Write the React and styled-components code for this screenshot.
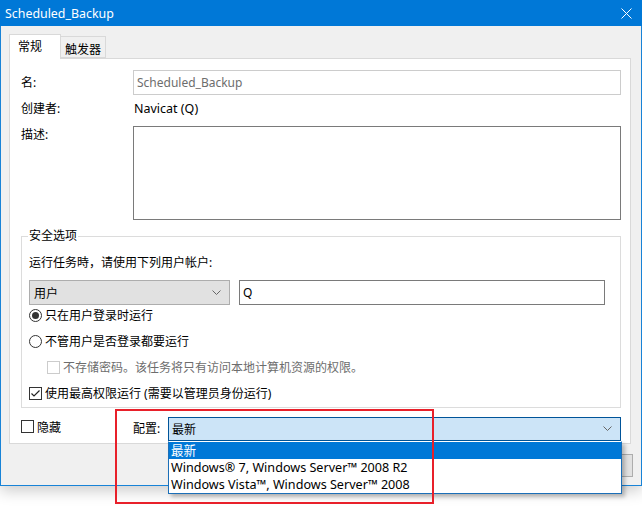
import React from 'react';
import styled, { createGlobalStyle } from 'styled-components';

const GlobalStyle = createGlobalStyle`
  html, body {
    margin: 0;
    padding: 0;
    background: #fff;
  }
  body {
    font-family: "Noto Sans", "Noto Sans CJK SC", sans-serif;
    font-size: 12px;
    color: #000;
    overflow: hidden;
  }
  * {
    box-sizing: border-box;
  }
`;

const Page = styled.div`
  position: relative;
  width: 642px;
  height: 510px;
  background: #fff;
`;

const Window = styled.div`
  width: 642px;
  height: 486px;
  display: flex;
  flex-direction: column;
  background: #f0f0f0;
  border: 1px solid #1883d7;
  border-top: none;
  box-shadow: 0 5px 14px rgba(0, 0, 0, 0.2);
`;

const TitleBar = styled.div`
  flex: none;
  height: 26px;
  margin: 0 -1px;
  padding: 0 10px 0 5px;
  display: flex;
  align-items: center;
  justify-content: space-between;
  background: #0078d7;
  color: #fff;
  font-size: 12.4px;
`;

const Body = styled.div`
  flex: 1;
  display: flex;
  flex-direction: column;
  padding: 8px 8px 0 8px;
`;

const TabStrip = styled.div`
  display: flex;
  align-items: flex-end;
  height: 24px;
`;

const Tab = styled.div`
  position: relative;
  z-index: ${p => (p.$active ? 1 : 0)};
  height: ${p => (p.$active ? '25px' : '22px')};
  margin-bottom: ${p => (p.$active ? '-1px' : '0')};
  margin-left: ${p => (p.$active ? '0' : '-1px')};
  width: ${p => (p.$active ? '52px' : '46px')};
  padding: ${p => (p.$active ? '4px 0 0 8px' : '5px 0 0 4px')};
  line-height: 16px;
  background: ${p => (p.$active ? '#fff' : '#f0f0f0')};
  border: 1px solid #d9d9d9;
  border-bottom: ${p => (p.$active ? 'none' : '1px solid #d9d9d9')};
`;

const Panel = styled.div`
  width: 622px;
  height: 386px;
  padding: 11px 9px 2px 11px;
  background: #fff;
  border: 1px solid #d9d9d9;
  display: flex;
  flex-direction: column;
`;

const FieldRow = styled.div`
  display: grid;
  grid-template-columns: 112px 1fr;
  align-items: ${p => (p.$top ? 'start' : 'center')};
  height: ${p => p.$h}px;
  margin-top: ${p => p.$mt || 0}px;
`;

const Label = styled.span`
  line-height: ${p => p.$lh || 16}px;
  white-space: nowrap;
`;

const TextBox = styled.div`
  flex: 1;
  height: 100%;
  padding-left: 3px;
  display: flex;
  align-items: ${p => (p.$multi ? 'flex-start' : 'center')};
  background: #fff;
  border: 1px solid ${p => (p.$disabled ? '#cccccc' : '#7a7a7a')};
  color: ${p => (p.$disabled ? '#6d6d6d' : '#000')};
  white-space: nowrap;
`;

const Value = styled.span`
  padding-left: 1px;
  line-height: 16px;
  font-size: 12.5px;
`;

const Group = styled.fieldset`
  margin: 8px 0 0 0;
  padding: 0 15px 4px 7px;
  border: 1px solid #dcdcdc;
  min-width: 0;
`;

const Legend = styled.legend`
  padding: 0 1px;
  margin-left: -1px;
  line-height: 16px;
`;

const Hint = styled.div`
  margin-top: 11px;
  line-height: 16px;
`;

const AccountRow = styled.div`
  display: flex;
  gap: 9px;
  height: 25px;
  margin-top: 9px;
`;

const ComboBox = styled.div`
  flex: ${p => (p.$width ? 'none' : '1')};
  width: ${p => (p.$width ? `${p.$width}px` : 'auto')};
  height: 100%;
  padding: 0 8px 0 ${p => p.$pl || 3}px;
  display: flex;
  align-items: center;
  justify-content: space-between;
  background: ${p => (p.$focused ? '#cce4f7' : '#e1e1e1')};
  border: 1px solid ${p => (p.$focused ? '#005499' : '#adadad')};
`;

const Options = styled.div`
  display: flex;
  flex-direction: column;
  gap: 6px;
`;

const OptionRow = styled.div`
  height: 20px;
  display: flex;
  align-items: center;
  gap: 3px;
  padding-left: ${p => p.$indent || 0}px;
  color: ${p => (p.$disabled ? '#6d6d6d' : '#000')};
  white-space: nowrap;
`;

const Radio = styled.span`
  flex: none;
  width: 13px;
  height: 13px;
  border-radius: 50%;
  border: 1px solid #333;
  display: flex;
  align-items: center;
  justify-content: center;
  background: #fff;

  &::after {
    content: '';
    width: 7px;
    height: 7px;
    border-radius: 50%;
    background: ${p => (p.$checked ? '#333' : 'transparent')};
  }
`;

const Box = styled.span`
  flex: none;
  width: 13px;
  height: 13px;
  border: 1px solid ${p => (p.$disabled ? '#cccccc' : '#333')};
  background: #fff;
  display: flex;
  align-items: center;
  justify-content: center;
`;

const BottomRow = styled.div`
  display: grid;
  grid-template-columns: 112px 35px 1fr;
  height: 24px;
  margin-top: 9px;
  align-items: center;
`;

const HideOption = styled(OptionRow)`
  align-self: start;
  height: 19px;
`;

const ButtonRow = styled.div`
  display: flex;
  justify-content: flex-end;
  gap: 8px;
  margin-top: 10px;
`;

const Button = styled.div`
  width: 75px;
  height: 23px;
  display: flex;
  align-items: center;
  justify-content: center;
  background: #e1e1e1;
  border: 1px solid #adadad;
`;

const DropList = styled.div`
  position: absolute;
  left: 168px;
  top: 441px;
  width: 454px;
  background: #fff;
  border: 1px solid #1b6fb8;
  border-top-color: #fff;
  box-shadow: 3px 3px 4px rgba(0, 0, 0, 0.25);
`;

const DropItem = styled.div`
  height: 17px;
  padding-left: 2px;
  line-height: 17px;
  font-size: 12.6px;
  white-space: nowrap;
  background: ${p => (p.$selected ? '#0078d7' : '#fff')};
  color: ${p => (p.$selected ? '#fff' : '#000')};
`;

const Annotation = styled.div`
  position: absolute;
  left: 115px;
  top: 409px;
  width: 319px;
  height: 95px;
  border: 2px solid #e8202a;
  pointer-events: none;
`;

const CloseIcon = () => (
  <svg width="11" height="11" viewBox="0 0 11 11">
    <path d="M0.5 0.5 L10.5 10.5 M10.5 0.5 L0.5 10.5" stroke="#fff" strokeWidth="1" />
  </svg>
);

const Chevron = () => (
  <svg width="9" height="6" viewBox="0 0 9 6">
    <path d="M0.5 0.5 L4.5 4.5 L8.5 0.5" stroke="#666" strokeWidth="1" fill="none" />
  </svg>
);

const Check = () => (
  <svg width="11" height="11" viewBox="0 0 11 11">
    <path d="M1.5 5.5 L4 8 L9.5 2.5" stroke="#222" strokeWidth="1.2" fill="none" />
  </svg>
);

export default function App() {
  return (
    <Page>
      <GlobalStyle />
      <Window>
        <TitleBar>
          <span>Scheduled_Backup</span>
          <CloseIcon />
        </TitleBar>
        <Body>
          <TabStrip>
            <Tab $active>常规</Tab>
            <Tab>触发器</Tab>
          </TabStrip>
          <Panel>
            <FieldRow $h={25}>
              <Label>名:</Label>
              <TextBox $disabled>Scheduled_Backup</TextBox>
            </FieldRow>
            <FieldRow $h={28}>
              <Label>创建者:</Label>
              <Value>Navicat (Q)</Value>
            </FieldRow>
            <FieldRow $h={94} $mt={3} $top>
              <Label $lh={18}>描述:</Label>
              <TextBox $multi />
            </FieldRow>
            <Group>
              <Legend>安全选项</Legend>
              <Hint>运行任务時，请使用下列用户帐户:</Hint>
              <AccountRow>
                <ComboBox $width={201} $pl={4}>
                  <span>用户</span>
                  <Chevron />
                </ComboBox>
                <TextBox>Q</TextBox>
              </AccountRow>
              <Options>
                <OptionRow>
                  <Radio $checked />
                  只在用户登录时运行
                </OptionRow>
                <OptionRow>
                  <Radio />
                  不管用户是否登录都要运行
                </OptionRow>
                <OptionRow $indent={18} $disabled>
                  <Box $disabled />
                  不存储密码。该任务将只有访问本地计算机资源的权限。
                </OptionRow>
                <OptionRow>
                  <Box>
                    <Check />
                  </Box>
                  使用最高权限运行 (需要以管理员身份运行)
                </OptionRow>
              </Options>
            </Group>
            <BottomRow>
              <HideOption>
                <Box />
                隐藏
              </HideOption>
              <Label>配置:</Label>
              <ComboBox $focused $pl={3}>
                <span>最新</span>
                <Chevron />
              </ComboBox>
            </BottomRow>
          </Panel>
          <ButtonRow>
            <Button>确定</Button>
            <Button>取消</Button>
          </ButtonRow>
        </Body>
      </Window>
      <DropList>
        <DropItem $selected>最新</DropItem>
        <DropItem>Windows® 7, Windows Server™ 2008 R2</DropItem>
        <DropItem>Windows Vista™, Windows Server™ 2008</DropItem>
      </DropList>
      <Annotation />
    </Page>
  );
}
